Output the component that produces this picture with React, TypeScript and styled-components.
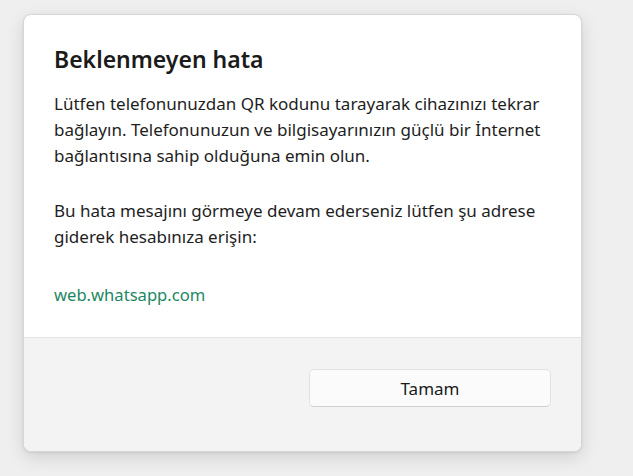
import React from "react";
import styled, { createGlobalStyle } from "styled-components";

const Global = createGlobalStyle`
  html, body { margin: 0; padding: 0; }
  body {
    background: #efefef;
    font-family: "Noto Sans", "Open Sans", sans-serif;
    color: #1b1b1b;
  }
`;

const Page = styled.div`
  width: 633px;
  height: 476px;
  padding: 14px 0 0 23px;
  box-sizing: border-box;
`;

const Dialog = styled.div`
  width: 559px;
  height: 438px;
  box-sizing: border-box;
  border-radius: 8px;
  border: 1px solid #d6d6d6;
  background: #ffffff;
  box-shadow: 0 6px 18px rgba(0, 0, 0, 0.12), 0 1px 3px rgba(0, 0, 0, 0.08);
  display: flex;
  flex-direction: column;
  overflow: hidden;
`;

const Content = styled.div`
  flex: 0 0 322px;
  padding: 29px 30px 0 30px;
  box-sizing: border-box;
`;

const Title = styled.h1`
  margin: 0 0 17px;
  font-size: 23px;
  line-height: 30px;
  font-weight: 600;
  color: #1b1b1b;
`;

const Paragraph = styled.p<{ $gapAfter?: number }>`
  margin: 0 0 ${(p) => p.$gapAfter ?? 0}px;
  font-size: 17px;
  line-height: 26px;
  color: #1e1e1e;
`;

const Link = styled.a`
  display: block;
  margin-top: 32px;
  font-size: 16.6px;
  line-height: 26px;
  color: #1d8763;
  text-decoration: none;
`;

const Footer = styled.div`
  flex: 1;
  background: #f3f3f3;
  border-top: 1px solid #e5e5e5;
  display: flex;
  justify-content: flex-end;
  align-items: flex-start;
  padding: 31px 30px 0 0;
`;

const Button = styled.button`
  width: 242px;
  height: 38px;
  border-radius: 5px;
  border: 1px solid #e2e2e2;
  border-bottom-color: #cfcfcf;
  background: #fbfbfb;
  font-family: inherit;
  font-size: 17px;
  color: #1b1b1b;
`;

export default function App() {
  return (
    <>
      <Global />
      <Page>
        <Dialog>
          <Content>
            <Title>Beklenmeyen hata</Title>
            <Paragraph $gapAfter={29}>
              Lütfen telefonunuzdan QR kodunu tarayarak cihazınızı tekrar bağlayın.
              Telefonunuzun ve bilgisayarınızın güçlü bir İnternet bağlantısına sahip
              olduğuna emin olun.
            </Paragraph>
            <Paragraph>
              Bu hata mesajını görmeye devam ederseniz lütfen şu adrese giderek
              hesabınıza erişin:
            </Paragraph>
            <Link href="#">web.whatsapp.com</Link>
          </Content>
          <Footer>
            <Button>Tamam</Button>
          </Footer>
        </Dialog>
      </Page>
    </>
  );
}
